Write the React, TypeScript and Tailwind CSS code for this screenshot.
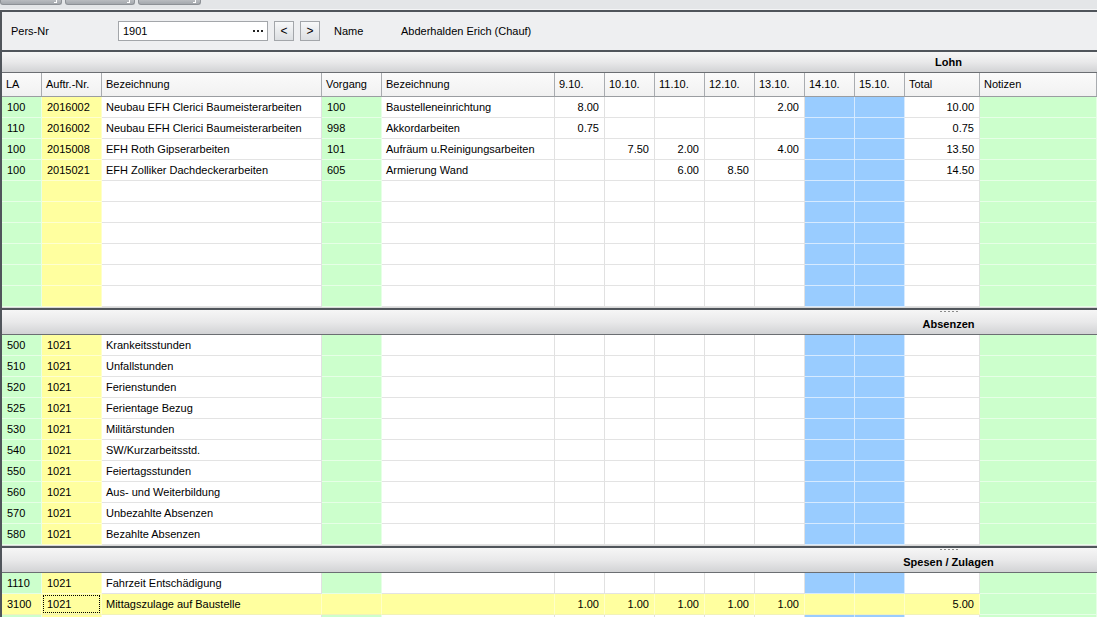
import React from "react";

const COLS =
  "grid grid-cols-[40px_60px_220px_60px_173px_50px_50px_50px_50px_50px_50px_50px_75px_1fr]";

const HEADS = [
  "LA",
  "Auftr.-Nr.",
  "Bezeichnung",
  "Vorgang",
  "Bezeichnung",
  "9.10.",
  "10.10.",
  "11.10.",
  "12.10.",
  "13.10.",
  "14.10.",
  "15.10.",
  "Total",
  "Notizen",
];

type Row = string[];

const blank = (): Row => Array(14).fill("");

const lohn: Row[] = [
  ["100", "2016002", "Neubau EFH Clerici Baumeisterarbeiten", "100", "Baustelleneinrichtung", "8.00", "", "", "", "2.00", "", "", "10.00", ""],
  ["110", "2016002", "Neubau EFH Clerici Baumeisterarbeiten", "998", "Akkordarbeiten", "0.75", "", "", "", "", "", "", "0.75", ""],
  ["100", "2015008", "EFH Roth Gipserarbeiten", "101", "Aufräum u.Reinigungsarbeiten", "", "7.50", "2.00", "", "4.00", "", "", "13.50", ""],
  ["100", "2015021", "EFH Zolliker Dachdeckerarbeiten", "605", "Armierung Wand", "", "", "6.00", "8.50", "", "", "", "14.50", ""],
  blank(),
  blank(),
  blank(),
  blank(),
  blank(),
  blank(),
];

const absNames: [string, string][] = [
  ["500", "Krankeitsstunden"],
  ["510", "Unfallstunden"],
  ["520", "Ferienstunden"],
  ["525", "Ferientage Bezug"],
  ["530", "Militärstunden"],
  ["540", "SW/Kurzarbeitsstd."],
  ["550", "Feiertagsstunden"],
  ["560", "Aus- und Weiterbildung"],
  ["570", "Unbezahlte Absenzen"],
  ["580", "Bezahlte Absenzen"],
];

const absenzen: Row[] = absNames.map(([la, name]) => {
  const r = blank();
  r[0] = la;
  r[1] = "1021";
  r[2] = name;
  return r;
});

const spesen: Row[] = [
  ["1110", "1021", "Fahrzeit Entschädigung", "", "", "", "", "", "", "", "", "", "", ""],
  ["3100", "1021", "Mittagszulage auf Baustelle", "", "", "1.00", "1.00", "1.00", "1.00", "1.00", "", "", "5.00", ""],
];

function cellColor(col: number, yellowRow: boolean) {
  if (col === 13) return "bg-[#ccffcc] border-r-[#e6ffe6] border-b-[#e6ffe6]";
  if (yellowRow) return "bg-[#ffff9f] border-r-[#ffffc8] border-b-[#f2f2b8]";
  if (col === 0 || col === 3) return "bg-[#ccffcc] border-r-[#e6ffe6] border-b-[#e6ffe6]";
  if (col === 1) return "bg-[#ffff9f] border-r-[#ffffc8] border-b-[#ffffd0]";
  if (col === 10 || col === 11) return "bg-[#99ccff] border-r-[#d6eaff] border-b-[#d6eaff]";
  return "bg-white border-r-[#e1e1e1] border-b-[#e3e3e3]";
}

function GridRow({ row, yellow, focusCol }: { row: Row; yellow?: boolean; focusCol?: number }) {
  return (
    <div className={`${COLS} h-[21px]`}>
      {row.map((v, i) => {
        const num = i >= 5 && i <= 12;
        return (
          <div
            key={i}
            className={`relative flex items-center overflow-hidden whitespace-nowrap border-r border-b ${cellColor(i, !!yellow)} ${
              num ? "justify-end pr-[5px]" : i === 2 || i === 4 ? "pl-[4px]" : "pl-[5px]"
            }`}
          >
            {focusCol === i && (
              <span className="absolute inset-[1px] border border-dotted border-black" />
            )}
            {v}
          </div>
        );
      })}
    </div>
  );
}

function SectionHeader({ title, grip }: { title: string; grip?: boolean }) {
  return (
    <>
      {grip && <div className="h-[1px] bg-[#d8d8d8]" />}
      <div className="h-[2px] bg-[#50555b]" />
      <div
        className={`relative flex items-center justify-end ${grip ? "h-[25px] pt-[4px]" : "h-[21px]"} bg-gradient-to-b from-[#f6f6f6] via-[#e9e9ea] to-[#d2d3d5] border-b border-[#6b6e72]`}
      >
        {grip && (
          <div className="absolute top-[1px] left-[938px] flex gap-[2px]">
            {[0, 1, 2, 3, 4].map((d) => (
              <span key={d} className="block w-[2px] h-[1px] bg-[#8a8a8a]" />
            ))}
          </div>
        )}
        <div className="w-[297px] text-center font-bold text-[11px] text-black">{title}</div>
      </div>
    </>
  );
}

export default function App() {
  return (
    <div
      className="w-[1097px] h-[617px] overflow-hidden bg-[#e9ebed] text-[11px] text-black"
      style={{ fontFamily: '"Liberation Sans", Arial, sans-serif' }}
    >
      {/* Toolbar (cut off at top) */}
      <div className="h-[10px] bg-[#e4e6e8] flex items-start gap-[3px] overflow-hidden border-b border-[#f4f5f6]">
        {[62, 70, 63].map((w, i) => (
          <div
            key={i}
            className="h-[5px] rounded-b-[3px] border border-t-0 border-[#8d9196] bg-gradient-to-b from-[#b9bcc0] to-[#a4a8ad] flex justify-end items-end pr-[4px] pb-[1px]"
            style={{ width: w }}
          >
            <span className="block w-[3px] h-[3px] border-r border-b border-white" />
          </div>
        ))}
      </div>

      <div className="border-l-2 border-[#50555b]">
        <div className="h-[2px] bg-[#50555b]" />
        {/* Personal header */}
        <div className="h-[38px] bg-[#eeeff1] flex items-center pl-[9px]">
          <div className="w-[107px]">Pers-Nr</div>
          <div className="w-[150px] h-[20px] bg-white border border-[#a3a6aa] flex items-center pl-[4px] pr-[4px] justify-between">
            <span>1901</span>
            <span className="flex gap-[2px]">
              <span className="block w-[2px] h-[2px] bg-[#222]" />
              <span className="block w-[2px] h-[2px] bg-[#222]" />
              <span className="block w-[2px] h-[2px] bg-[#222]" />
            </span>
          </div>
          <div className="ml-[6px] w-[20px] h-[20px] border border-[#a3a6aa] bg-gradient-to-b from-[#f7f8f9] to-[#dcdfe2] flex items-center justify-center text-[12px]">
            &lt;
          </div>
          <div className="ml-[6px] w-[20px] h-[20px] border border-[#a3a6aa] bg-gradient-to-b from-[#f7f8f9] to-[#dcdfe2] flex items-center justify-center text-[12px]">
            &gt;
          </div>
          <div className="ml-[14px] w-[67px]">Name</div>
          <div>Abderhalden Erich (Chauf)</div>
        </div>

        {/* Lohn */}
        <SectionHeader title="Lohn" />
        <div className={`${COLS} h-[24px] bg-gradient-to-b from-[#fbfbfb] to-[#f1f1f1] border-b border-[#9a9da1]`}>
          {HEADS.map((h, i) => (
            <div key={i} className="flex items-center pl-[4px] border-r border-[#a9acb0] whitespace-nowrap">
              {h}
            </div>
          ))}
        </div>
        {lohn.map((r, i) => (
          <GridRow key={i} row={r} />
        ))}

        {/* Absenzen */}
        <SectionHeader title="Absenzen" grip />
        {absenzen.map((r, i) => (
          <GridRow key={i} row={r} />
        ))}

        {/* Spesen / Zulagen */}
        <SectionHeader title="Spesen / Zulagen" grip />
        <GridRow row={spesen[0]} />
        <GridRow row={spesen[1]} yellow focusCol={1} />
        <GridRow row={blank()} />
      </div>
    </div>
  );
}
